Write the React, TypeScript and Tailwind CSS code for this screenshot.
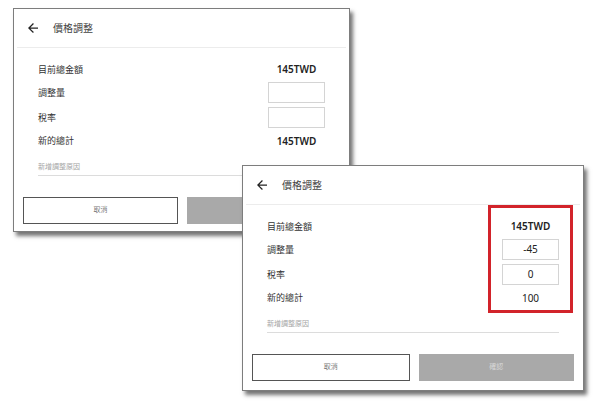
import React from "react";

const FONT = { fontFamily: '"Noto Sans", "Noto Sans CJK TC", sans-serif' };

function ArrowBack() {
  return (
    <svg width="10" height="10" viewBox="4 4 16 16" className="block">
      <path d="M20 11H7.83l5.59-5.59L12 4l-8 8 8 8 1.41-1.41L7.83 13H20v-2z" fill="#222" />
    </svg>
  );
}

type Props = {
  className: string;
  adj?: string;
  tax?: string;
  total: string;
  totalBold?: boolean;
  highlight?: boolean;
};

function Dialog({ className, adj, tax, total, totalBold, highlight }: Props) {
  return (
    <div
      className={`absolute bg-white border border-[#7d7d7d] shadow-[3px_4px_4px_rgba(0,0,0,0.55)] flex flex-col ${className}`}
      style={FONT}
    >
      <div className="h-[38px] flex items-center pl-[14px] shrink-0">
        <ArrowBack />
        <span className="ml-[15px] text-[10px] text-[#444] leading-none">價格調整</span>
      </div>
      <div className="h-px mx-[3px] bg-[#ececec] shrink-0" />
      <div className="px-[24px] flex flex-col mt-[10px]">
        <div className="h-[22px] flex items-center justify-between">
          <span className="text-[9px] text-[#333] leading-none">目前總金額</span>
          <span className="w-[57px] text-center text-[10px] font-semibold text-[#222] leading-none">145TWD</span>
        </div>
        <div className="h-[21px] mt-[2px] flex items-center justify-between">
          <span className="text-[9px] text-[#333] leading-none">調整量</span>
          <div className="w-[57px] h-[21px] border border-[#d4d4d4] flex items-center justify-center text-[10px] text-[#222]">
            {adj}
          </div>
        </div>
        <div className="h-[21px] mt-[4px] flex items-center justify-between">
          <span className="text-[9px] text-[#333] leading-none">稅率</span>
          <div className="w-[57px] h-[21px] border border-[#d4d4d4] flex items-center justify-center text-[10px] text-[#222]">
            {tax}
          </div>
        </div>
        <div className="h-[21px] mt-[2px] flex items-center justify-between">
          <span className="text-[9px] text-[#333] leading-none">新的總計</span>
          <span
            className={`w-[57px] text-center text-[10px] text-[#222] leading-none ${totalBold ? "font-semibold" : ""}`}
          >
            {total}
          </span>
        </div>
        <div className="h-[19px] mt-[6px] flex items-center border-b border-[#dcdcdc]">
          <span className="text-[7px] text-[#a5a5a5] leading-none">新增調整原因</span>
        </div>
      </div>
      <div className="flex gap-[9px] px-[9px] mt-[21px]">
        <div className="flex-1 h-[27px] border border-[#555] flex items-center justify-center text-[7px] text-[#777]">
          取消
        </div>
        <div className="flex-1 h-[27px] bg-[#a9a9a9] flex items-center justify-center text-[7px] text-[#d8d8d8]">
          確認
        </div>
      </div>
      {highlight && (
        <div className="absolute left-[245px] top-[39px] w-[85px] h-[108px] border-[3px] border-[#d2232a]" />
      )}
    </div>
  );
}

export default function App() {
  return (
    <div className="relative w-[600px] h-[404px] bg-white overflow-hidden">
      <Dialog className="left-[13px] top-[8px] w-[337px] h-[224px]" total="145TWD" totalBold />
      <Dialog
        className="left-[242px] top-[165px] w-[342px] h-[226px]"
        adj="-45"
        tax="0"
        total="100"
        highlight
      />
    </div>
  );
}
